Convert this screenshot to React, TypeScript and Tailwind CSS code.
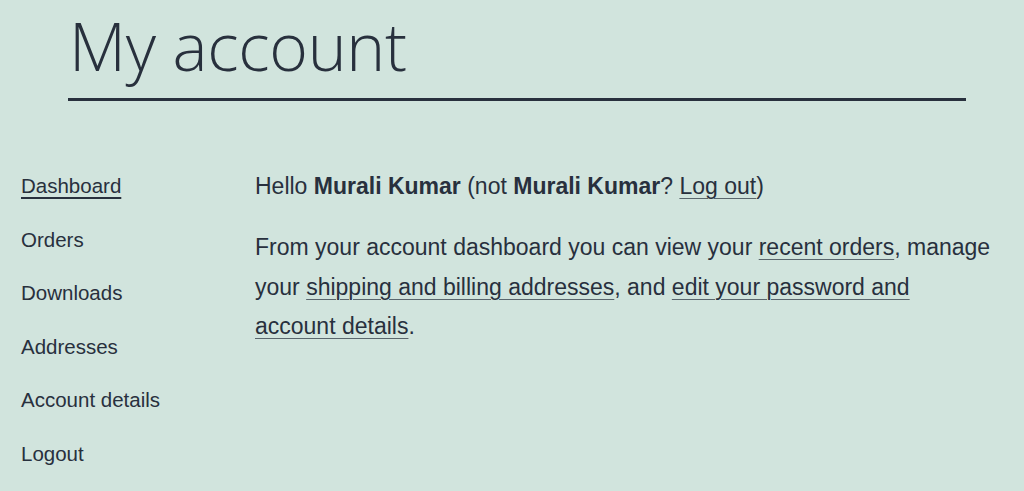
import React from 'react';

const navItems = ['Dashboard', 'Orders', 'Downloads', 'Addresses', 'Account details', 'Logout'];

const TextLink: React.FC<{ children: React.ReactNode }> = ({ children }) => (
  <a href="#" className="underline decoration-1 underline-offset-[4px] decoration-[#28303d]/70">
    {children}
  </a>
);

const App: React.FC = () => {
  return (
    <div className="min-h-screen bg-[#d1e4dd] text-[#28303d] font-['Liberation_Sans',Arial,sans-serif]">
      <header className="ml-[68px] w-[898px] pt-[12px] pb-[20px] border-b-[3px] border-[#28303d]">
        <h1 className="font-['Open_Sans','Noto_Sans',sans-serif] font-light text-[66px] leading-[66px] tracking-[-0.3px] pl-[1px]">
          My account
        </h1>
      </header>

      <div className="flex mt-[58px] pl-[21px]">
        <nav className="w-[234px] shrink-0">
          <ul className="text-[20.5px]">
            {navItems.map((item, i) => (
              <li key={item} className="leading-[53.6px]">
                <a
                  href="#"
                  className={i === 0 ? 'underline decoration-[1.5px] underline-offset-[4px]' : ''}
                >
                  {item}
                </a>
              </li>
            ))}
          </ul>
        </nav>

        <div className="w-[738px] pt-[8px] text-[23px] leading-[39.5px]">
          <p>
            Hello <strong>Murali Kumar</strong> (not <strong>Murali Kumar</strong>? <TextLink>Log out</TextLink>)
          </p>
          <p className="mt-[21.5px]">
            From your account dashboard you can view your <TextLink>recent orders</TextLink>, manage your{' '}
            <TextLink>shipping and billing addresses</TextLink>, and{' '}
            <TextLink>edit your password and account details</TextLink>.
          </p>
        </div>
      </div>
    </div>
  );
};

export default App;
